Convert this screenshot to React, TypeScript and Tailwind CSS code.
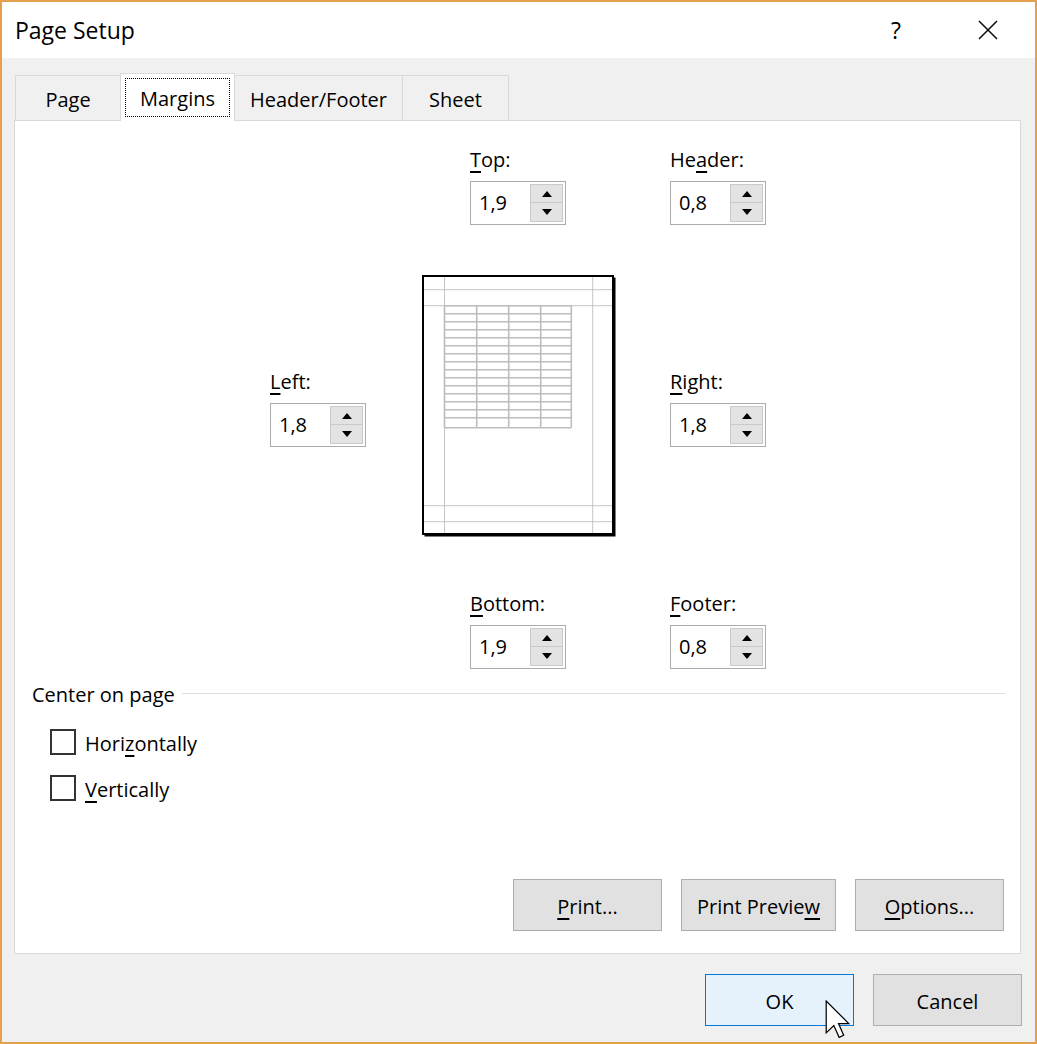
import type React from 'react';

const font = "font-['Segoe_UI','Open_Sans',sans-serif]";

const Spinner: React.FC<{ label: React.ReactNode; value: string; className?: string }> = ({
  label,
  value,
  className = '',
}) => (
  <div className={`flex flex-col w-[96px] ${className}`}>
    <div className="h-[24px] leading-[24px] text-[20px] text-black">{label}</div>
    <div className="mt-[9px] h-[44px] w-[96px] border border-[#acacac] bg-white flex items-center justify-between pl-[8px] pr-[2px]">
      <span className="text-[20px] text-black">{value}</span>
      <div className="flex flex-col w-[33px] h-[38px]">
        <div className="h-[19px] bg-[#e3e3e3] border border-[#c9c9c9] flex items-center justify-center">
          <svg width="10" height="6" viewBox="0 0 10 6">
            <path d="M0 6 L5 0 L10 6 Z" fill="#000" />
          </svg>
        </div>
        <div className="h-[19px] bg-[#e3e3e3] border border-t-0 border-[#c9c9c9] flex items-center justify-center">
          <svg width="10" height="6" viewBox="0 0 10 6">
            <path d="M0 0 L10 0 L5 6 Z" fill="#000" />
          </svg>
        </div>
      </div>
    </div>
  </div>
);

const U: React.FC<{ children: React.ReactNode }> = ({ children }) => (
  <span className="underline decoration-[1.5px] underline-offset-[4px]">{children}</span>
);

const PagePreview = () => {
  const rows = [30.7, 38.7, 46.7, 54.7, 62.7, 70.7, 78.7, 86.7, 94.7, 102.7, 110.7, 118.7, 126.7, 134.7, 142.7, 152.7];
  const cols = [22.5, 54.7, 86.7, 118.7, 149.3];
  return (
    <svg width="194" height="262" viewBox="0 0 194 262" className="shrink-0">
      <rect x="2.5" y="2.5" width="191" height="259" fill="#000" />
      <rect x="1" y="1" width="190" height="258" fill="#fff" stroke="#000" strokeWidth="2" />
      <g stroke="#c4c4c4" strokeWidth="1">
        <line x1="22.5" y1="2" x2="22.5" y2="258" />
        <line x1="170.7" y1="2" x2="170.7" y2="258" />
        <line x1="2" y1="14.7" x2="190" y2="14.7" />
        <line x1="2" y1="30.7" x2="190" y2="30.7" />
        <line x1="2" y1="230.7" x2="190" y2="230.7" />
        <line x1="2" y1="246.7" x2="190" y2="246.7" />
      </g>
      <g stroke="#bdbdbd" strokeWidth="1.6">
        {rows.map((y) => (
          <line key={`r${y}`} x1="22.5" y1={y} x2="149.3" y2={y} />
        ))}
        {cols.map((x) => (
          <line key={`c${x}`} x1={x} y1="30.7" x2={x} y2="152.7" />
        ))}
      </g>
    </svg>
  );
};

const Checkbox: React.FC<{ label: React.ReactNode; className?: string }> = ({ label, className = '' }) => (
  <div className={`flex items-center h-[26px] ml-[35px] ${className}`}>
    <div className="w-[26px] h-[26px] border-2 border-[#333] bg-white" />
    <span className="ml-[9px] text-[20px] text-black leading-[24px] pt-[3px]">{label}</span>
  </div>
);

const Btn: React.FC<{ children: React.ReactNode; w: string; primary?: boolean }> = ({
  children,
  w,
  primary,
}) => (
  <button
    type="button"
    className={`${w} h-[52px] border text-[20px] text-black flex items-center justify-center pt-[3px] ${
      primary ? 'bg-[#e5f1fb] border-[#0078d7]' : 'bg-[#e1e1e1] border-[#adadad]'
    }`}
  >
    {children}
  </button>
);

export default function App() {
  return (
    <div className={`${font} relative w-[1037px] h-[1044px] border-2 border-[#e5a04e] flex flex-col bg-[#f0f0f0]`}>
      {/* title bar */}
      <div className="h-[56px] bg-white flex items-center shrink-0">
        <span className="ml-[13px] text-[23px] text-black">Page Setup</span>
        <span className="ml-auto text-[23px] text-black mr-[77px]">?</span>
        <svg width="20" height="20" viewBox="0 0 20 20" className="mr-[37px]">
          <path d="M1 1 L19 19 M19 1 L1 19" stroke="#111" strokeWidth="1.6" />
        </svg>
      </div>

      {/* tabs */}
      <div className="flex items-end h-[47px] mt-[15px] ml-[13px] text-[20px] text-black">
        <div className="w-[106px] h-[45px] border border-b-0 border-[#d9d9d9] flex items-center justify-center pt-[3px]">
          Page
        </div>
        <div className="w-[115px] h-[48px] -ml-px -mb-px relative z-10 bg-white border border-b-0 border-[#d9d9d9] p-[4px]">
          <div className="h-full border border-dotted border-black flex items-center justify-center pt-[2px]">
            Margins
          </div>
        </div>
        <div className="w-[169px] h-[45px] -ml-px border border-b-0 border-[#d9d9d9] flex items-center justify-center pt-[3px]">
          Header/Footer
        </div>
        <div className="w-[107px] h-[45px] -ml-px border border-b-0 border-[#d9d9d9] flex items-center justify-center pt-[3px]">
          Sheet
        </div>
      </div>

      {/* panel */}
      <div className="ml-[12px] w-[1007px] h-[834px] bg-white border border-[#d9d9d9] flex flex-col shrink-0">
        <div className="flex pt-[27px] ml-[455px]">
          <Spinner label={<><U>T</U>op:</>} value="1,9" />
          <Spinner className="ml-[104px]" label={<>He<U>a</U>der:</>} value="0,8" />
        </div>

        <div className="flex mt-[50px] ml-[255px] items-start">
          <Spinner className="mt-[95px]" label={<><U>L</U>eft:</>} value="1,8" />
          <div className="ml-[56px]">
            <PagePreview />
          </div>
          <Spinner className="ml-[54px] mt-[95px]" label={<><U>R</U>ight:</>} value="1,8" />
        </div>

        <div className="flex mt-[55px] ml-[455px]">
          <Spinner label={<><U>B</U>ottom:</>} value="1,9" />
          <Spinner className="ml-[104px]" label={<><U>F</U>ooter:</>} value="0,8" />
        </div>

        <div className="flex items-center mt-[14px] pl-[17px] pr-[15px] h-[24px]">
          <span className="text-[20px] text-black leading-[24px]">Center on page</span>
          <div className="flex-1 h-px bg-[#dcdcdc] ml-[7px] -mt-[4px]" />
        </div>

        <Checkbox className="mt-[22px]" label={<>Hori<U>z</U>ontally</>} />
        <Checkbox className="mt-[20px]" label={<><U>V</U>ertically</>} />

        <div className="mt-auto mb-[22px] mr-[16px] flex justify-end">
          <Btn w="w-[149px]"><U>P</U>rint...</Btn>
          <div className="ml-[19px]">
            <Btn w="w-[155px]">Print Previe<U>w</U></Btn>
          </div>
          <div className="ml-[19px]">
            <Btn w="w-[149px]"><U>O</U>ptions...</Btn>
          </div>
        </div>
      </div>

      {/* bottom buttons */}
      <div className="flex justify-end gap-[19px] pt-[20px] pr-[13px]">
        <Btn w="w-[149px]" primary>OK</Btn>
        <Btn w="w-[149px]">Cancel</Btn>
      </div>

      {/* mouse cursor */}
      <svg
        width="25"
        height="39"
        viewBox="0 0 12 19"
        className="absolute left-[823px] top-[998px]"
      >
        <path
          d="M0.5 0.5 L0.5 16 L4.2 12.4 L6.8 18.2 L9 17.2 L6.5 11.5 L11.5 11.5 Z"
          fill="#fff"
          stroke="#000"
          strokeWidth="0.6"
          strokeLinejoin="miter"
        />
      </svg>
    </div>
  );
}
